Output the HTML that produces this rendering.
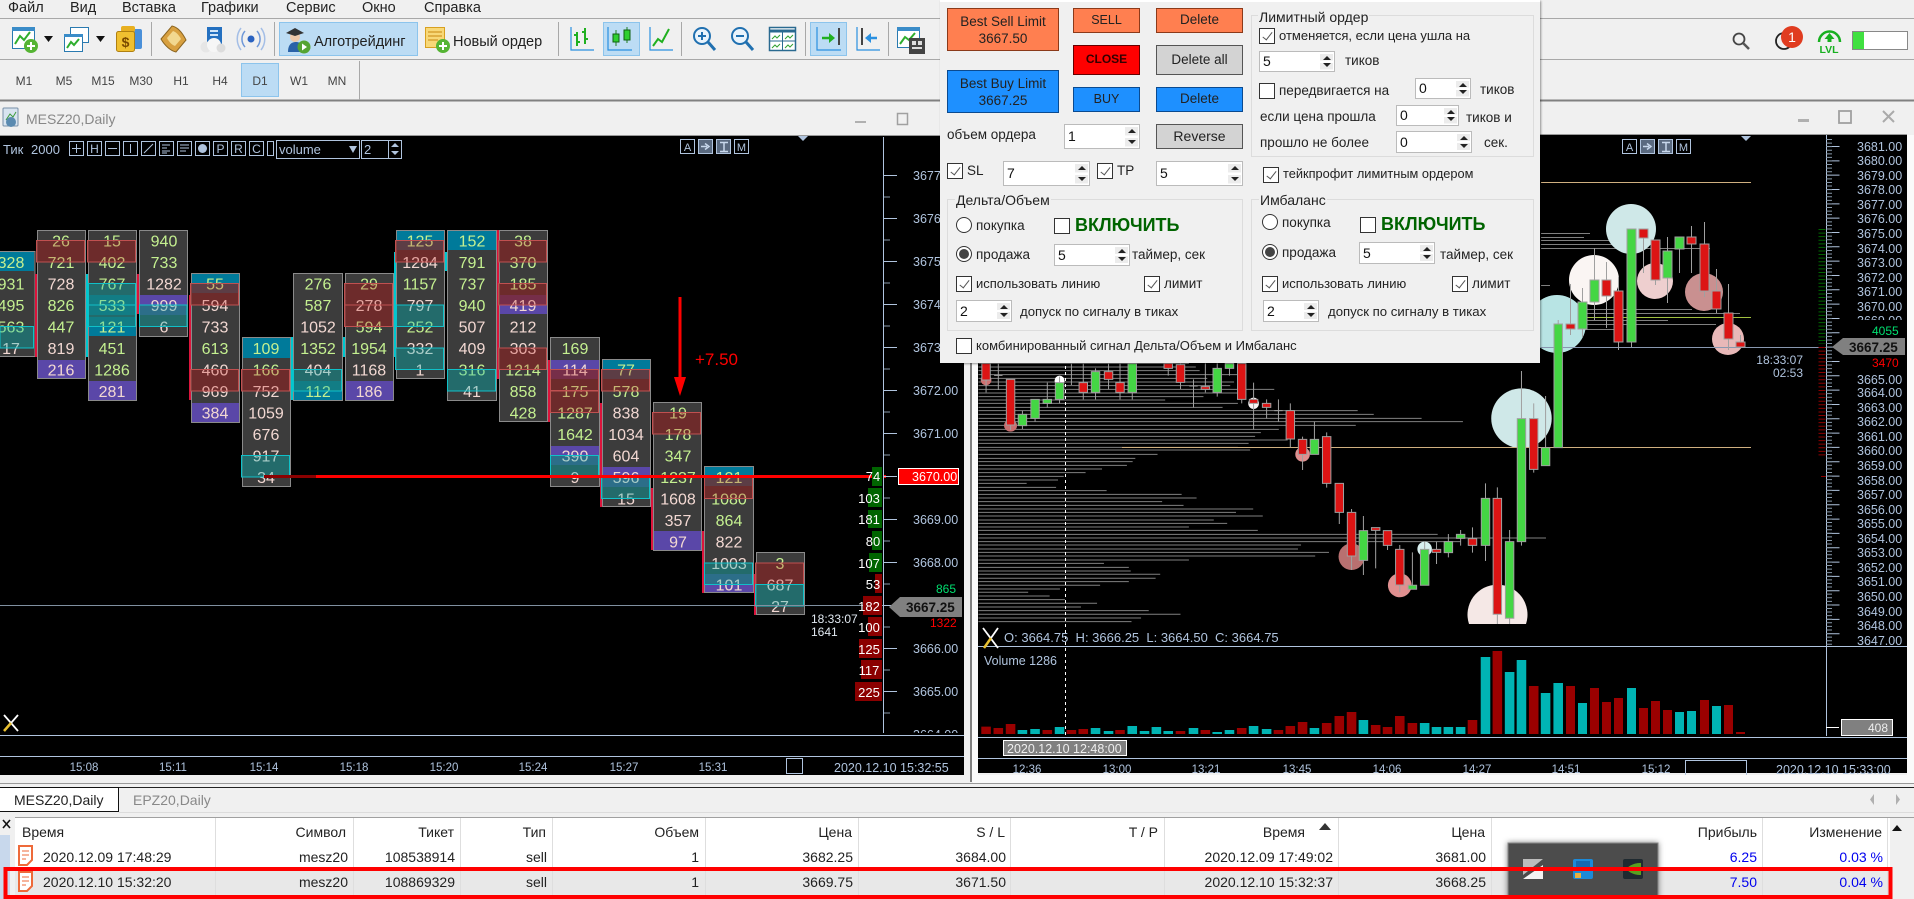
<!DOCTYPE html>
<html><head><meta charset="utf-8"><title>Chart</title>
<style>
html,body{margin:0;padding:0;width:1914px;height:899px;overflow:hidden;background:#f0f0f0;font-family:"Liberation Sans",sans-serif}
svg{position:absolute;left:0;top:0}
svg text{font-family:"Liberation Sans",sans-serif}
.n{vector-effect:non-scaling-stroke}
.a{fill:#c4f090}.b{fill:#f2d8d2}.o{fill:#c4f090}.c{fill:#c4f090}.d{fill:#f2d8d2}
.s{fill:#b0c4de}
.col{fill:#3c3c3c;stroke:#8a8a8a}
#dlg{position:absolute;left:940px;top:0;width:600px;height:363px;background:#f0f0f0;border-top:2px solid #fff;box-sizing:border-box;box-shadow:1px 1px 2px rgba(0,0,0,.4);font-size:13.5px;color:#222;z-index:5}
#dlg div{position:absolute;box-sizing:border-box;white-space:nowrap}
.t{line-height:16px}
.btn{text-align:center;font-size:13.5px;color:#222}
.or{background:#ff7f50;border:1px solid #8b3a1a}
.bl{background:#1e90ff;border:1px solid #0a4a90}
.gr{background:#d3d3d3;border:1px solid #555}
.sp{background:linear-gradient(#ececec,#ececec) no-repeat calc(100% - 1px) 2px/13px calc(50% - 3px),linear-gradient(#ececec,#ececec) no-repeat calc(100% - 1px) calc(100% - 2px)/13px calc(50% - 3px),#fff;border:1px solid #bbb;padding-left:3px;color:#111;font-size:14px}
.sp::before{content:"";position:absolute;right:3px;top:4px;border:4px solid transparent;border-top:0;border-bottom:4px solid #222}
.sp::after{content:"";position:absolute;right:3px;bottom:4px;border:4px solid transparent;border-bottom:0;border-top:4px solid #222}
.cb{width:16px;height:16px;background:#fff;border:1px solid #333}
.cb.on::after{content:"";position:absolute;left:5px;top:1px;width:4px;height:9px;border:solid #555;border-width:0 1.5px 1.5px 0;transform:rotate(38deg)}
.rd{width:16px;height:16px;background:#fff;border:1px solid #333;border-radius:50%}
.rd.on::after{content:"";position:absolute;left:2px;top:2px;width:10px;height:10px;background:#444;border-radius:50%}
.gb{border:1px solid #dcdcdc}
.gl{background:#f0f0f0;padding:0 1px;font-size:14px}
.vk{font-weight:bold;font-size:18px;color:#006400;line-height:20px}
.f13{font-size:13px}
</style></head><body>
<svg width="1914" height="899" viewBox="0 0 1914 899" xmlns="http://www.w3.org/2000/svg">
<defs>
<g id="or">
<rect x="36.500" y="240.500" width="48" height="21.500"/><rect x="87.500" y="240.500" width="48" height="21.500"/><rect x="190.500" y="283.500" width="48" height="21.500"/><rect x="190.500" y="369.500" width="48" height="21.500"/><rect x="241.500" y="369.500" width="48" height="21.500"/><rect x="344.500" y="283.500" width="48" height="21.500"/><rect x="344.500" y="305" width="48" height="21.500"/><rect x="395.500" y="240.500" width="48" height="21.500"/><rect x="498.500" y="240.500" width="48" height="21.500"/><rect x="498.500" y="283.500" width="48" height="21.500"/><rect x="498.500" y="348" width="48" height="21.500"/><rect x="550.500" y="369.500" width="48" height="21"/><rect x="550.500" y="391" width="48" height="21.500"/><rect x="601.500" y="369.500" width="48" height="21.500"/><rect x="652.500" y="412.500" width="48" height="21.500"/><rect x="704.500" y="477" width="48" height="21.500"/><rect x="755.500" y="563" width="48" height="21.500"/>
</g>
<g id="ot">
<rect x="0" y="326.500" width="33.500" height="21.500"/><rect x="88.500" y="283.500" width="47" height="21.500"/><rect x="88.500" y="305" width="47" height="21.500"/><rect x="139.500" y="305" width="47.500" height="21.500"/><rect x="241.500" y="455.500" width="48" height="21.500"/><rect x="293.500" y="369.500" width="48" height="21.500"/><rect x="396.500" y="305" width="47" height="21.500"/><rect x="395.500" y="348" width="48" height="21.500"/><rect x="447.500" y="369.500" width="48" height="21.500"/><rect x="550.500" y="455.500" width="48" height="21.500"/><rect x="601.500" y="477" width="48" height="21.500"/><rect x="704.500" y="563" width="48" height="21.500"/><rect x="755.500" y="584.500" width="48" height="21.500"/>
</g>
</defs>
<rect width="1914" height="899" fill="#f0f0f0"/>
<!-- menu -->
<g font-size="14.5" fill="#222">
<text x="8" y="12">Файл</text><text x="70" y="12">Вид</text><text x="122" y="12">Вставка</text><text x="201" y="12">Графики</text><text x="286" y="12">Сервис</text><text x="362" y="12">Окно</text><text x="424" y="12">Справка</text>
</g>
<path d="M0 18.5H1914M0 59.5H1914" stroke="#a8a8a8" fill="none"/>
<path d="M0 100.5H1914" stroke="#808080" stroke-width="2" fill="none"/>
<path d="M151.500 22V56M274.500 22V56M558.500 22V56M681.500 22V56M805.500 22V56M888.500 22V56" stroke="#a8a8a8"/>
<path d="M359.500 61V100" stroke="#a8a8a8"/>
<!-- selected buttons -->
<g fill="#bcdcf4" stroke="#8cc4ec"><rect x="279.500" y="22.500" width="138" height="33"/><rect x="603.500" y="22.500" width="36" height="33"/><rect x="810.500" y="22.500" width="36" height="33"/><rect x="241.500" y="63.500" width="37" height="33"/></g>
<!-- new chart icon -->
<g><rect x="12.500" y="27.500" width="22" height="21" fill="#fff" stroke="#2a7ab0"/><rect x="12" y="27" width="23" height="4" fill="#3a8cc8"/><path d="M15 44l5-8 4 4 6-8" fill="none" stroke="#2fae2f" stroke-width="2"/><circle cx="31" cy="46" r="7" fill="#55b433"/><path d="M31 42v8M27 46h8" stroke="#fff" stroke-width="2"/><path d="M44 36h9l-4.500 6z" fill="#111"/></g>
<g><rect x="70.500" y="27.500" width="18" height="15" fill="#fff" stroke="#2a7ab0"/><rect x="64.500" y="34.500" width="18" height="17" fill="#fff" stroke="#2a7ab0"/><rect x="64" y="34" width="19" height="3" fill="#3a8cc8"/><path d="M67 48l4-6 3 3 5-6" fill="none" stroke="#2fae2f" stroke-width="2"/><path d="M96 36h9l-4.500 6z" fill="#111"/></g>
<!-- dollar -->
<g><rect x="127" y="29" width="15" height="20" rx="2" fill="#4a90d9"/><rect x="121" y="26" width="14" height="6" rx="2" fill="#e8b020"/><rect x="116.500" y="31.500" width="18" height="20" rx="2" fill="#f0c030" stroke="#b08010"/><text x="125.500" y="47" font-size="14" font-weight="bold" text-anchor="middle" fill="#7a4a00">$</text></g>
<!-- book -->
<path d="M161 39l11-13c5 1 10 6 14 14l-10 12c-5-1-11-6-15-13z" fill="#d8a040" stroke="#8a6420"/><path d="M167 38l6-7c3 1 6 4 8 8l-6 7c-3-1-6-4-8-8z" fill="#f2d890"/>
<!-- cloud -->
<rect x="207" y="27" width="15" height="17" fill="#2470c0"/><rect x="210" y="30" width="8" height="2" fill="#cfe4f8"/><rect x="210" y="34" width="8" height="2" fill="#cfe4f8"/><circle cx="206" cy="47" r="5.500" fill="#e6e6e6"/><circle cx="214" cy="45" r="7" fill="#f6f6f6"/><circle cx="221" cy="48" r="4.500" fill="#dcdcdc"/>
<!-- signal -->
<circle cx="251" cy="39" r="3.500" fill="#2a62c0"/><path d="M245 31a12 12 0 0 0 0 16M257 31a12 12 0 0 1 0 16" fill="none" stroke="#6f98d8" stroke-width="1.500"/><path d="M241 28a18 18 0 0 0 0 22M261 28a18 18 0 0 1 0 22" fill="none" stroke="#a4bee6" stroke-width="1.500"/>
<!-- algo -->
<circle cx="295" cy="37" r="5" fill="#eec8a8"/><path d="M286 33l9-5 9 5-9 3z" fill="#333"/><path d="M288 52c0-8 4-10 8-10s7 2 8 10z" fill="#2a62a8"/><circle cx="304" cy="47" r="6.500" fill="#55a433"/><path d="M302 43.500l5 3.500-5 3.500z" fill="#fff"/>
<text x="314" y="46" font-size="14.500" fill="#222">Алготрейдинг</text>
<!-- new order -->
<rect x="425.500" y="27.500" width="19" height="20" fill="#f8d878" stroke="#d8a020"/><path d="M428 32h14M428 36h14M428 40h10" stroke="#c88810"/><circle cx="443" cy="46" r="7" fill="#55b433"/><path d="M443 42v8M439 46h8" stroke="#fff" stroke-width="2"/>
<text x="453" y="46" font-size="14.500" fill="#222">Новый ордер</text>
<!-- chart type icons -->
<g fill="none" stroke="#2a90e0" stroke-width="1.200"><path d="M571 27V50H594"/><path d="M608 27V50H632"/><path d="M650 27V50H673"/><path d="M817 27V50H841"/><path d="M857 27V50H880"/></g>
<path d="M577 32v14M577 35h-3M577 42h3M585 28v16M585 32h-3M585 39h3" stroke="#20b020" stroke-width="2" fill="none"/>
<path d="M616 30v16M627 27v16" stroke="#208020"/><rect x="613" y="34" width="6" height="8" fill="#30d030" stroke="#106010"/><rect x="624" y="30" width="6" height="10" fill="#30d030" stroke="#106010"/>
<path d="M653 46l5-7 4 3 7-13" fill="none" stroke="#20b020" stroke-width="2"/>
<!-- zoom -->
<circle cx="702" cy="36" r="8" fill="#eaf4fc" stroke="#2070b0" stroke-width="2"/><path d="M702 32v8M698 36h8" stroke="#2070b0" stroke-width="2"/><path d="M708 42l7 8" stroke="#2070b0" stroke-width="3"/>
<circle cx="740" cy="36" r="8" fill="#eaf4fc" stroke="#2070b0" stroke-width="2"/><path d="M736 36h8" stroke="#2070b0" stroke-width="2"/><path d="M746 42l7 8" stroke="#2070b0" stroke-width="3"/>
<rect x="769.500" y="27.500" width="26" height="23" fill="#fff" stroke="#2a6a90" stroke-width="1.500"/><path d="M769 31h27" stroke="#2a6a90" stroke-width="3"/><path d="M782.500 32V50M770 41H795" stroke="#2a6a90"/><path d="M772 39l3-3 2 2 3-3M785 39l3-3 2 2 3-3M772 48l3-3 2 2 3-3M785 48l3-3 2 2 3-3" fill="none" stroke="#30a030"/>
<!-- shift -->
<path d="M822 38h10" stroke="#20b020" stroke-width="2.500"/><path d="M829 33l6 5-6 5z" fill="#20b020"/><path d="M839 28v17" stroke="#444" stroke-width="2"/>
<path d="M862 28v17" stroke="#444" stroke-width="2"/><path d="M868 38h9" stroke="#2a90e0" stroke-width="2.500"/><path d="M871 33l-6 5 6 5z" fill="#2a90e0"/>
<rect x="897.500" y="27.500" width="22" height="20" fill="#fff" stroke="#2a7ab0"/><rect x="897" y="27" width="23" height="4" fill="#3a8cc8"/><path d="M900 44l5-7 4 3 6-7" fill="none" stroke="#2fae2f" stroke-width="2"/><rect x="909" y="38" width="16" height="16" fill="#444"/><rect x="912" y="41" width="4" height="4" fill="#ddd"/><rect x="918" y="41" width="4" height="4" fill="#ddd"/><rect x="912" y="47" width="10" height="2" fill="#ddd"/>
<!-- timeframes -->
<g font-size="12" fill="#444" text-anchor="middle"><text x="24" y="85">M1</text><text x="64" y="85">M5</text><text x="103" y="85">M15</text><text x="141" y="85">M30</text><text x="181" y="85">H1</text><text x="220" y="85">H4</text><text x="260" y="85">D1</text><text x="299" y="85">W1</text><text x="337" y="85">MN</text></g>
<!-- top right icons -->
<circle cx="1739" cy="39" r="5.500" fill="none" stroke="#444" stroke-width="1.800"/><path d="M1743 43l6 6" stroke="#555" stroke-width="2.500"/>
<circle cx="1784" cy="41" r="8" fill="none" stroke="#222" stroke-width="1.800"/><circle cx="1792" cy="37" r="11" fill="#e03c20"/><text x="1792" y="42" font-size="14" fill="#fff" text-anchor="middle">1</text>
<path d="M1819 42a10.500 10.500 0 0 1 21 0" fill="none" stroke="#18b020" stroke-width="2.500"/><path d="M1829.500 33l5 6h-3v3h-4v-3h-3z" fill="#18b020"/><text x="1829" y="53" font-size="10.500" font-weight="bold" fill="#18b020" text-anchor="middle">LVL</text>
<rect x="1852.500" y="31.500" width="55" height="18" fill="#fff" stroke="#888"/><rect x="1853" y="32" width="11" height="17" fill="#40e040"/>
<!-- left window title -->
<rect x="3" y="108" width="15" height="18" rx="1" fill="#d8e4f0" stroke="#7890a8"/><path d="M6 120l4-6 3 3 3-5" stroke="#3a9a3a" fill="none"/><circle cx="11" cy="122" r="5" fill="#5a8ab0"/>
<text x="26" y="124" font-size="14" fill="#888">MESZ20,Daily</text>
<rect x="855" y="121" width="11" height="2" fill="#b0b0b0"/><rect x="897.500" y="113.500" width="10" height="11" fill="none" stroke="#a0a0a0" stroke-width="1.500"/>
<!-- right window title -->
<rect x="1798" y="119" width="11" height="3" fill="#b0b0b0"/><rect x="1839" y="111" width="12" height="12" fill="none" stroke="#a0a0a0" stroke-width="1.800"/><path d="M1883 111l11 11M1894 111l-11 11" stroke="#aaa" stroke-width="2"/>
<!-- window frames -->
<rect x="970" y="102" width="2" height="682" fill="#808080"/><rect x="972" y="102" width="6" height="682" fill="#fafafa"/>
<rect x="1907" y="135" width="7" height="649" fill="#fafafa"/>
<rect x="0" y="136" width="964" height="639" fill="#000"/>
<rect x="978" y="135" width="929" height="638" fill="#000"/>
<path d="M0 135.500H970M978 134.500H1907" stroke="#999"/>
<!-- chart toolbar left -->
<text x="3" y="154" font-size="13" class="s">Тик</text><text x="31" y="154" font-size="13" class="s">2000</text>
<g fill="none" stroke="#b0c4de"><rect x="69.500" y="141.500" width="14" height="14"/><rect x="87.500" y="141.500" width="14" height="14"/><rect x="105.500" y="141.500" width="14" height="14"/><rect x="123.500" y="141.500" width="14" height="14"/><rect x="141.500" y="141.500" width="14" height="14"/><rect x="159.500" y="141.500" width="14" height="14"/><rect x="177.500" y="141.500" width="14" height="14"/><rect x="195.500" y="141.500" width="14" height="14"/><rect x="213.500" y="141.500" width="14" height="14"/><rect x="231.500" y="141.500" width="14" height="14"/><rect x="249.500" y="141.500" width="14" height="14"/><rect x="267.500" y="141.500" width="6" height="14"/><rect x="276.500" y="140.500" width="83" height="18"/><rect x="361.500" y="140.500" width="40" height="18"/><path d="M388.500 141V158"/>
<path d="M72 148.500H81M76.500 144V153M108 148.500H117M130.500 144V153M144 153L153 144M162 145h8M162 148h5M162 151h8M162 153h5M180 145h9M180 148h9M180 151h6"/></g>
<g font-size="12" class="s" text-anchor="middle"><text x="94.500" y="153">H</text><text x="220.500" y="153">P</text><text x="238.500" y="153">R</text><text x="256.500" y="153">C</text></g>
<circle cx="202.500" cy="148.500" r="4.500" class="s"/>
<text x="279" y="154" font-size="13" class="s">volume</text><path d="M349 146h8l-4 7z" class="s"/><text x="364" y="154" font-size="13" class="s">2</text><path d="M391 147l4-4 4 4zM391 151l4 4 4-4z" class="s"/>
<g><rect x="680.500" y="139.500" width="14" height="14" fill="none" stroke="#b0c4de"/><rect x="698.500" y="139.500" width="14" height="14" fill="#5a6a80" stroke="#b0c4de"/><rect x="716.500" y="139.500" width="14" height="14" fill="#5a6a80" stroke="#b0c4de"/><rect x="734.500" y="139.500" width="14" height="14" fill="none" stroke="#b0c4de"/></g>
<g font-size="11" class="s" text-anchor="middle"><text x="687.500" y="151">A</text><text x="741.500" y="151">M</text></g>
<path d="M701 146.500h6M705 143.500l4 3-4 3M720 142.500h8M720 151.500h8M724 142.500v9" fill="none" stroke="#c8d8ec" stroke-width="1.500"/>
<path d="M798 136h10l-5 5z" class="s"/>

<!-- footprint columns -->
<g class="col">
<rect x="-2" y="251.500" width="37" height="105"/><rect x="37.500" y="230.500" width="48" height="148"/><rect x="88.500" y="230.500" width="48" height="170"/><rect x="139.500" y="230.500" width="48" height="106"/><rect x="191.500" y="273.500" width="48" height="149"/><rect x="242.500" y="337.500" width="48" height="149"/><rect x="293.500" y="273.500" width="49" height="127"/><rect x="345.500" y="273.500" width="48" height="127"/><rect x="396.500" y="230.500" width="48" height="148"/><rect x="447.500" y="230.500" width="49" height="170"/><rect x="499.500" y="230.500" width="48" height="191"/><rect x="550.500" y="337.500" width="49" height="149"/><rect x="602.500" y="359.500" width="48" height="147"/><rect x="653.500" y="402.500" width="48" height="148"/><rect x="704.500" y="466.500" width="49" height="126"/><rect x="756.500" y="552.500" width="48" height="62"/>
</g>
<!-- coloured cells -->
<g fill="#007a9a">
<rect x="0" y="252" width="34" height="19"/><rect x="89" y="295" width="47" height="20"/><rect x="89" y="317" width="47" height="19"/><rect x="192" y="274" width="47" height="19"/><rect x="243" y="338" width="47" height="20"/><rect x="294" y="381" width="48" height="19"/><rect x="397" y="231" width="47" height="19"/><rect x="448" y="231" width="48" height="19"/><rect x="603" y="360" width="47" height="19"/><rect x="705" y="467" width="48" height="19"/>
</g>
<g fill="#5a47a8">
<rect x="38" y="360" width="47" height="18"/><rect x="89" y="381" width="47" height="19"/><rect x="140" y="295" width="47" height="20"/><rect x="192" y="403" width="47" height="19"/><rect x="346" y="381" width="47" height="19"/><rect x="500" y="295" width="47" height="19"/><rect x="551" y="360" width="48" height="19"/><rect x="551" y="446" width="48" height="19"/><rect x="603" y="467" width="47" height="20"/><rect x="654" y="531" width="47" height="19"/><rect x="705" y="574" width="48" height="18"/>
</g>
<!-- side bars -->
<g fill="#dc143c">
<rect x="35" y="274" width="2" height="83"/><rect x="137" y="274" width="2" height="40"/><rect x="189" y="295" width="2" height="105"/><rect x="497" y="230" width="2" height="149"/><rect x="548" y="360" width="2" height="62"/><rect x="600" y="403" width="2" height="104"/><rect x="651" y="488" width="2" height="62"/><rect x="702" y="531" width="2" height="62"/><rect x="754" y="574" width="2" height="41"/>
</g>
<g fill="#00c8d0">
<rect x="86" y="274" width="2" height="83"/><rect x="291" y="337" width="2" height="63"/><rect x="343" y="337" width="2" height="20"/><rect x="394" y="252" width="2" height="105"/><rect x="445" y="252" width="2" height="19"/>
</g>
<!-- overlay base (under numbers) -->
<use href="#or" fill="#4e1c1c" fill-opacity=".6"/>
<use href="#ot" fill="#2d5858" fill-opacity=".6"/>
<!-- numbers -->
<g font-size="16" text-anchor="middle">
<text x="11" y="268" class="a">328</text><text x="11" y="289.500" class="a">931</text><text x="11" y="311" class="a">495</text><text x="11" y="332.500" class="a">563</text><text x="11" y="354" class="b">17</text>
<text x="61" y="246.500" class="o">26</text><text x="61" y="268" class="a">721</text><text x="61" y="289.500" class="b">728</text><text x="61" y="311" class="a">826</text><text x="61" y="332.500" class="a">447</text><text x="61" y="354" class="b">819</text><text x="61" y="375.500" class="b">216</text>
<text x="112" y="246.500" class="o">15</text><text x="112" y="268" class="o">402</text><text x="112" y="289.500" class="a">767</text><text x="112" y="311" class="c">533</text><text x="112" y="332.500" class="a">121</text><text x="112" y="354" class="a">451</text><text x="112" y="375.500" class="a">1286</text><text x="112" y="397" class="b">281</text>
<text x="164" y="246.500" class="a">940</text><text x="164" y="268" class="a">733</text><text x="164" y="289.500" class="b">1282</text><text x="164" y="311" class="b">999</text><text x="164" y="332.500" class="d">6</text>
<text x="215" y="289.500" class="o">55</text><text x="215" y="311" class="b">594</text><text x="215" y="332.500" class="b">733</text><text x="215" y="354" class="a">613</text><text x="215" y="375.500" class="b">460</text><text x="215" y="397" class="b">969</text><text x="215" y="418.500" class="b">384</text>
<text x="266" y="354" class="a">109</text><text x="266" y="375.500" class="o">166</text><text x="266" y="397" class="b">752</text><text x="266" y="418.500" class="b">1059</text><text x="266" y="440" class="b">676</text><text x="266" y="461.500" class="b">917</text><text x="266" y="483" class="b">34</text>
<text x="318" y="289.500" class="a">276</text><text x="318" y="311" class="a">587</text><text x="318" y="332.500" class="b">1052</text><text x="318" y="354" class="a">1352</text><text x="318" y="375.500" class="d">404</text><text x="318" y="397" class="a">112</text>
<text x="369" y="289.500" class="o">29</text><text x="369" y="311" class="b">278</text><text x="369" y="332.500" class="o">594</text><text x="369" y="354" class="a">1954</text><text x="369" y="375.500" class="b">1168</text><text x="369" y="397" class="b">186</text>
<text x="420" y="246.500" class="o">125</text><text x="420" y="268" class="b">1284</text><text x="420" y="289.500" class="a">1157</text><text x="420" y="311" class="d">797</text><text x="420" y="332.500" class="a">252</text><text x="420" y="354" class="d">332</text><text x="420" y="375.500" class="b">1</text>
<text x="472" y="246.500" class="a">152</text><text x="472" y="268" class="a">791</text><text x="472" y="289.500" class="a">737</text><text x="472" y="311" class="a">940</text><text x="472" y="332.500" class="b">507</text><text x="472" y="354" class="b">409</text><text x="472" y="375.500" class="a">316</text><text x="472" y="397" class="b">41</text>
<text x="523" y="246.500" class="o">38</text><text x="523" y="268" class="o">370</text><text x="523" y="289.500" class="o">185</text><text x="523" y="311" class="b">419</text><text x="523" y="332.500" class="b">212</text><text x="523" y="354" class="b">303</text><text x="523" y="375.500" class="a">1214</text><text x="523" y="397" class="a">858</text><text x="523" y="418.500" class="a">428</text>
<text x="575" y="354" class="a">169</text><text x="575" y="375.500" class="b">114</text><text x="575" y="397" class="o">175</text><text x="575" y="418.500" class="a">1287</text><text x="575" y="440" class="a">1642</text><text x="575" y="461.500" class="b">390</text><text x="575" y="483" class="b">9</text>
<text x="626" y="375.500" class="o">77</text><text x="626" y="397" class="o">578</text><text x="626" y="418.500" class="b">838</text><text x="626" y="440" class="b">1034</text><text x="626" y="461.500" class="b">604</text><text x="626" y="483" class="b">596</text><text x="626" y="504.500" class="b">15</text>
<text x="678" y="418.500" class="o">19</text><text x="678" y="440" class="a">178</text><text x="678" y="461.500" class="a">347</text><text x="678" y="483" class="a">1237</text><text x="678" y="504.500" class="b">1608</text><text x="678" y="526" class="b">357</text><text x="678" y="547.500" class="b">97</text>
<text x="729" y="483" class="o">121</text><text x="729" y="504.500" class="a">1080</text><text x="729" y="526" class="a">864</text><text x="729" y="547.500" class="b">822</text><text x="729" y="569" class="d">1003</text><text x="729" y="590.500" class="b">101</text>
<text x="780" y="569" class="o">3</text><text x="780" y="590.500" class="d">687</text><text x="780" y="612" class="b">27</text>
</g>
<!-- overlay tint (over numbers) -->
<use href="#or" fill="#c83232" fill-opacity=".3" stroke="#c05050"/>
<use href="#ot" fill="#00b4b4" fill-opacity=".3" stroke="#10c0c8"/>
<!-- lines on left chart -->
<path d="M0 605.500H883" stroke="#8090a0"/>
<path d="M264 476.500H316" stroke="#8b0000" stroke-width="3"/><path d="M316 476.500H880" stroke="#f00" stroke-width="3"/>
<rect x="883" y="475" width="3" height="3" fill="#f00"/>
<path d="M680 297V378" stroke="#f00" stroke-width="3"/><path d="M674 377h12l-6 19z" fill="#f00"/>
<text x="695" y="365" font-size="17" fill="#f00">+7.50</text>
<!-- left axis -->
<path d="M883.500 137V733" stroke="#b0c4de"/>
<path d="M890.500 175V730" stroke="#b0c4de" stroke-width="13" stroke-dasharray="1 42" fill="none"/>
<path d="M887 196.500V730" stroke="#8899aa" stroke-width="6" stroke-dasharray="1 42"/>
<g font-size="12.500" class="s"><text x="913" y="180">3677.00</text><text x="913" y="223">3676.00</text><text x="913" y="266">3675.00</text><text x="913" y="309">3674.00</text><text x="913" y="352">3673.00</text><text x="913" y="395">3672.00</text><text x="913" y="438">3671.00</text><text x="913" y="524">3669.00</text><text x="913" y="567">3668.00</text><text x="913" y="653">3666.00</text><text x="913" y="696">3665.00</text></g>
<svg x="880" y="727" width="84" height="6"><text x="33" y="12" font-size="12.500" class="s">3664.00</text></svg>
<rect x="898.500" y="468.500" width="60" height="16" fill="#f00" stroke="#fff"/><text x="912" y="481" font-size="12.500" fill="#fff">3670.00</text>
<path d="M889 607l11-10h62v20h-62z" fill="#808080"/><text x="906" y="612" font-size="13.500" font-weight="bold" fill="#111">3667.25</text>
<text x="936" y="593" font-size="12" fill="#00e070">865</text><text x="930" y="627" font-size="12" fill="#f00">1322</text>
<text x="811" y="623" font-size="12" fill="#e0e8f0">18:33:07</text><text x="811" y="636" font-size="12" fill="#e0e8f0">1641</text>
<!-- ladder -->
<g fill="#006400"><rect x="872" y="467" width="10" height="19"/><rect x="868" y="488" width="14" height="19"/><rect x="868" y="510" width="14" height="18"/><rect x="872" y="531" width="10" height="19"/><rect x="869" y="553" width="13" height="19"/></g>
<g fill="#8b0000"><rect x="875" y="574" width="7" height="19"/><rect x="863" y="596" width="19" height="19"/><rect x="868" y="617" width="14" height="19"/><rect x="859" y="639" width="23" height="19"/><rect x="861" y="660" width="21" height="19"/><rect x="855" y="682" width="27" height="19"/></g>
<g font-size="13" fill="#fff" text-anchor="middle"><text x="873" y="481">74</text><text x="869" y="503">103</text><text x="869" y="524">181</text><text x="873" y="546">80</text><text x="869" y="568">107</text><text x="873" y="589">53</text><text x="869" y="611">182</text><text x="869" y="632">100</text><text x="869" y="654">125</text><text x="869" y="675">117</text><text x="869" y="697">225</text></g>
<path d="M4 715l14 16" stroke="#fff" stroke-width="1.800"/><path d="M18 715l-7 8" stroke="#fff" stroke-width="1.800"/><path d="M11 723l-7 8" stroke="#e8c030" stroke-width="2.500"/>
<path d="M0 735.500H964M0 756.500H964" stroke="#b0c4de"/>
<g font-size="11.500" class="s" text-anchor="middle"><text x="84" y="771">15:08</text><text x="173" y="771">15:11</text><text x="264" y="771">15:14</text><text x="354" y="771">15:18</text><text x="444" y="771">15:20</text><text x="533" y="771">15:24</text><text x="624" y="771">15:27</text><text x="713" y="771">15:31</text></g>
<rect x="786.500" y="758.500" width="16" height="15" fill="none" stroke="#b0c4de"/>
<text x="834" y="772" font-size="12.500" class="s">2020.12.10 15:32:55</text>

<!-- RIGHT CHART -->
<g fill="none" stroke="#808080">
<path d="M1541 233.500H1590M1541 237.500H1584M1541 240.500H1630M1541 244.500H1620M1541 248.500H1710M1541 285.500H1550M1541 309.500H1692M1541 313.500H1740M1541 320.500H1668M1541 324.500H1716M1541 329.500H1620M1541 335.500H1560"/>
<g transform="translate(970 360) scale(.3827 .3333)"><path class="n" d="M22 10H572M22 21H590M22 32H600M22 44H700M22 55H620M22 66H690M22 77H680M22 88H795M22 99H700M22 110H610M22 120H510M22 130H700M22 142H660M22 152H1013M22 163H1055M22 175H1180M22 185H1288M22 196H1008M22 208H807M22 218H760M22 229H745M22 240H830M22 250H728M22 262H700M22 270H732M22 283H490M22 295H432M22 305H425M22 316H410M22 327H345M22 338H302M22 349H245M22 360H230M22 370H148M22 382H225M22 392H357M22 403H553M22 414H592M22 425H502M22 436H558M22 447H740M22 457H695M22 468H765M22 480H637M22 490H672M22 501H572M22 511H752M22 523H1222M22 534H1505M22 545H1283M22 555H865M22 567H857M22 577H938M22 588H902M22 600H572M22 610H350M22 622H415M22 633H420M22 643H497M22 655H485M22 665H415M22 676H340M22 687H235M22 697H152M22 708H208M22 719H248M22 730H332M22 741H290M22 752H467M22 763H550M22 774H447M22 785H422"/></g>
</g>
<!-- circles -->
<g transform="translate(970 360) scale(.3827 .3333)">
<ellipse cx="42" cy="60" rx="14" ry="16" fill="#d07070"/><ellipse cx="106" cy="197" rx="17" ry="18" fill="#c87070"/><ellipse cx="234" cy="62" rx="13" ry="15" fill="#fff"/><ellipse cx="741" cy="130" rx="14" ry="17" fill="#f8f4f4"/><ellipse cx="869" cy="283" rx="19" ry="22" fill="#e09090"/><ellipse cx="997" cy="590" rx="34" ry="40" fill="#b87070"/><ellipse cx="1123" cy="676" rx="31" ry="36" fill="#e09090"/><ellipse cx="1188" cy="567" rx="19" ry="22" fill="#d8f0f0"/><ellipse cx="1441" cy="175" rx="79" ry="90" fill="#cfe8e8"/>
</g>
<path d="M1469 624A30 30 0 1 1 1526 624Z" fill="#f5e8e6"/>
<circle cx="1557" cy="324" r="29" fill="#b8e4e4"/><circle cx="1631" cy="229" r="25" fill="#cfe8e8"/><circle cx="1594" cy="280" r="25" fill="#faf5f3"/><circle cx="1655" cy="281" r="18" fill="#eecfcf"/><circle cx="1704" cy="292" r="19" fill="#c99090"/><circle cx="1728" cy="339" r="16" fill="#e8b8b8"/>
<!-- horizontals -->
<path d="M1541 182.500H1751" stroke="#d0b080"/><path d="M1122 447.500H1751" stroke="#d0b080"/><path d="M1585 317.500H1751" stroke="#a0c040"/><path d="M1541 347.500H1826" stroke="#8898b0"/>
<!-- candles -->
<g transform="translate(970 360) scale(.3827 .3333)" fill="none">
<path class="n" stroke="#a0a0a0" d="M42 10V97M74 10V90M106 58V210M137 152V207M170 118V185M202 68V143M234 50V130M265 10V75M296 10V118M328 25V118M362 10V88M392 10V118M424 10V118M518 10V47M550 10V87M584 58V143M615 10V97M646 10V110M678 10V47M710 10V130M741 68V208M775 118V175M806 118V185M837 130V262M869 230V330M900 185V283M932 217V383M965 370V492M997 447V630M1028 468V645M1060 503V625M1091 512V570M1123 555V697M1156 577V688M1188 545V676M1219 545V612M1250 522V592M1282 510V557M1313 502V578M1347 370V603M1378 382V792M1410 510V792M1441 33V557M1473 130V338M1504 108V263M1537 -120V263M63 46H85M573 78H595M795 152H817"/>
<path class="n" fill="#dc1414" stroke="#a0a0a0" d="M31 10H53V60H31ZM95 58H117V195H95ZM285 68H307V97H285ZM351 35H373V58H351ZM381 68H403V97H381ZM507 10H529V25H507ZM539 14H561V67H539ZM604 80H626V88H604ZM699 10H721V118H699ZM730 118H752V130H730ZM764 130H786V142H764ZM826 152H848V237H826ZM858 238H880V283H858ZM921 230H943V370H921ZM954 370H976V457H954ZM986 457H1008V588H986ZM1049 503H1071V511H1049ZM1080 512H1102V556H1080ZM1112 568H1134V675H1112ZM1208 568H1230V577H1208ZM1302 536H1324V556H1302ZM1367 415H1389V763H1367ZM1462 176H1484V328H1462Z"/>
<path class="n" fill="#44d644" stroke="#a0a0a0" d="M126 163H148V197H126ZM159 118H181V175H159ZM191 118H213V130H191ZM223 68H245V118H223ZM317 35H339V97H317ZM413 10H435V97H413ZM635 25H657V97H635ZM667 10H689V25H667ZM889 238H911V283H889ZM1017 512H1039V601H1017ZM1145 676H1167V688H1145ZM1177 568H1199V676H1177ZM1239 545H1261V578H1239ZM1271 523H1293V535H1271ZM1336 415H1358V556H1336ZM1399 545H1421V775H1399ZM1430 176H1452V545H1430ZM1493 263H1515V317H1493ZM1526 -108H1548V263H1526Z"/>
</g>
<path stroke="#a0a0a0" fill="none" d="M1570.500 284V335M1582.500 288V337M1594.500 248V320M1606.500 262V328M1618.500 277V350M1631.500 229V347M1643.500 229V273M1655.500 240V285M1667.500 237V303M1679.500 237V273M1691.500 226V273M1704.500 222V297M1716.500 269V313M1728.500 284V350M1740.500 335V347"/>
<path fill="#dc1414" stroke="#a0a0a0" d="M1566 324H1575V329H1566ZM1602 280H1611V296H1602ZM1614 291H1623V342H1614ZM1639 229H1648V238H1639ZM1651 240H1660V280H1651ZM1687 237H1696V244H1687ZM1700 244H1709V291H1700ZM1712 291H1721V309H1712ZM1724 313H1733V339H1724ZM1736 342H1745V347H1736Z"/>
<path fill="#44d644" stroke="#a0a0a0" d="M1578 302H1587V329H1578ZM1590 280H1599V302H1590ZM1627 229H1636V342H1627ZM1663 251H1672V278H1663ZM1675 237H1684V249H1675Z"/>
<!-- right chart top buttons -->
<g><rect x="1622.500" y="139.500" width="14" height="14" fill="none" stroke="#b0c4de"/><rect x="1640.500" y="139.500" width="14" height="14" fill="#5a6a80" stroke="#b0c4de"/><rect x="1658.500" y="139.500" width="14" height="14" fill="#5a6a80" stroke="#b0c4de"/><rect x="1676.500" y="139.500" width="14" height="14" fill="none" stroke="#b0c4de"/></g>
<g font-size="11" class="s" text-anchor="middle"><text x="1629.500" y="151">A</text><text x="1683.500" y="151">M</text></g>
<path d="M1643 146.500h6M1647 143.500l4 3-4 3M1662 142.500h8M1662 151.500h8M1666 142.500v9" fill="none" stroke="#c8d8ec" stroke-width="1.500"/>
<path d="M1741 136h10l-5 5z" class="s"/>
<!-- right axis -->
<path d="M1826.500 135V736" stroke="#b0c4de"/>
<path d="M1833 146V646" stroke="#b0c4de" stroke-width="13" stroke-dasharray="1 13.330" fill="none"/>
<path d="M1829 139V646" stroke="#8899aa" stroke-width="6" stroke-dasharray="1 2.580" fill="none"/>
<path d="M1822 229V344" stroke="#006400" stroke-width="7" stroke-dasharray="1 2.580" fill="none"/>
<path d="M1822 347V456" stroke="#8b0000" stroke-width="7" stroke-dasharray="1 2.580" fill="none"/>
<rect x="1821" y="476" width="5" height="1" fill="#8b0000"/>
<g font-size="12.500" class="s"><text x="1857" y="151">3681.00</text><text x="1857" y="165">3680.00</text><text x="1857" y="180">3679.00</text><text x="1857" y="194">3678.00</text><text x="1857" y="209">3677.00</text><text x="1857" y="223">3676.00</text><text x="1857" y="238">3675.00</text><text x="1857" y="253">3674.00</text><text x="1857" y="267">3673.00</text><text x="1857" y="282">3672.00</text><text x="1857" y="296">3671.00</text><text x="1857" y="311">3670.00</text><text x="1857" y="384">3665.00</text><text x="1857" y="397">3664.00</text><text x="1857" y="412">3663.00</text><text x="1857" y="426">3662.00</text><text x="1857" y="441">3661.00</text><text x="1857" y="455">3660.00</text><text x="1857" y="470">3659.00</text><text x="1857" y="485">3658.00</text><text x="1857" y="499">3657.00</text><text x="1857" y="514">3656.00</text><text x="1857" y="528">3655.00</text><text x="1857" y="543">3654.00</text><text x="1857" y="557">3653.00</text><text x="1857" y="572">3652.00</text><text x="1857" y="586">3651.00</text><text x="1857" y="601">3650.00</text><text x="1857" y="616">3649.00</text><text x="1857" y="630">3648.00</text><text x="1857" y="645">3647.00</text></g>
<svg x="1850" y="315" width="57" height="5"><text x="7" y="10" font-size="12.500" class="s">3669.00</text></svg>
<text x="1872" y="335" font-size="12" fill="#00e070">4055</text><text x="1872" y="367" font-size="12" fill="#f00">3470</text>
<path d="M1832 347l11-9h62v17h-62z" fill="#808080"/><text x="1849" y="352" font-size="13.500" font-weight="bold" fill="#111">3667.25</text>
<g font-size="12" class="s" text-anchor="end"><text x="1803" y="364">18:33:07</text><text x="1803" y="377">02:53</text></g>
<!-- sub pane -->
<path d="M978 646.500H1907" stroke="#b0c4de"/>
<path d="M1065.500 360V738" stroke="#fff" stroke-dasharray="3 3"/>
<text x="1004" y="642" font-size="13" class="s" xml:space="preserve">O: 3664.75  H: 3666.25  L: 3664.50  C: 3664.75</text>
<path d="M983 628l15 20" stroke="#fff" stroke-width="1.800"/><path d="M998 628l-7 10" stroke="#fff" stroke-width="1.800"/><path d="M991 638l-7 10" stroke="#e8c030" stroke-width="2.500"/>
<text x="984" y="665" font-size="12.500" class="s">Volume 1286</text>
<g transform="translate(970 360) scale(.3827 .3333)" fill="none" stroke-width="25">
<path stroke="#9b0000" d="M42 1100V1122M74 1104V1122M106 1092V1122M202 1110V1122M265 1110V1122M296 1107V1122M392 1110V1122M550 1113V1122M615 1110V1122M710 1104V1122M806 1110V1122M837 1098V1122M869 1086V1122M932 1089V1122M965 1068V1122M997 1056V1122M1060 1095V1122M1091 1101V1122M1123 1068V1122M1156 1089V1122M1313 1080V1122M1378 873V1122M1473 978V1122"/>
<path stroke="#00b4b4" d="M137 1110V1122M170 1107V1122M234 1101V1122M328 1104V1122M362 1113V1122M424 1098V1122M456 1113V1122M487 1101V1122M518 1113V1122M584 1104V1122M646 1116V1122M678 1110V1122M741 1098V1122M775 1107V1122M900 1104V1122M1028 1080V1122M1188 1089V1122M1219 1101V1122M1250 1101V1122M1282 1101V1122M1347 891V1122M1410 936V1122M1441 900V1122M1504 999V1122M1537 969V1122"/>
</g>
<g fill="none" stroke-width="9">
<path stroke="#9b0000" d="M1570.500 686V734M1594.500 688V734M1606.500 702V734M1618.500 698V734M1643.500 708V734M1655.500 701V734M1667.500 710V734M1704.500 700V734M1728.500 705V734M1740.500 732V734"/>
<path stroke="#00b4b4" d="M1582.500 703V734M1631.500 688V734M1679.500 712V734M1691.500 711V734M1716.500 706V734"/>
</g>
<rect x="1841.500" y="719.500" width="51" height="16" fill="#808080" stroke="#fff"/><text x="1888" y="732" font-size="12" fill="#eee" text-anchor="end">408</text>
<path d="M1826 727.500H1839" stroke="#fff"/>
<path d="M978 737.500H1907M978 758.500H1907" stroke="#b0c4de"/>
<rect x="1003.500" y="740.500" width="123" height="15" fill="#808080" stroke="#fff"/><text x="1007" y="753" font-size="12.500" fill="#eee">2020.12.10 12:48:00</text>
<g font-size="11.500" class="s" text-anchor="middle"><text x="1027" y="773">12:36</text><text x="1117" y="773">13:00</text><text x="1206" y="773">13:21</text><text x="1297" y="773">13:45</text><text x="1387" y="773">14:06</text><text x="1477" y="773">14:27</text><text x="1566" y="773">14:51</text><text x="1656" y="773">15:12</text></g>
<rect x="1685.500" y="760.500" width="61" height="15" fill="none" stroke="#b0c4de"/>
<text x="1776" y="774" font-size="12.500" class="s">2020.12.10 15:33:00</text>

<!-- bottom panel -->
<rect x="0" y="782" width="1914" height="117" fill="#f0f0f0"/>
<path d="M0 783.500H1914" stroke="#999"/>
<rect x="973" y="775" width="941" height="8" fill="#fafafa"/>
<path d="M118 787.500H1914" stroke="#222"/>
<rect x="0" y="787" width="118" height="24" fill="#fff"/><path d="M0 787.500H118.500V811.500H0" fill="none" stroke="#111"/>
<text x="14" y="805" font-size="14" fill="#222">MESZ20,Daily</text><text x="133" y="805" font-size="14" fill="#888">EPZ20,Daily</text>
<path d="M1874 794v11l-4-5.500zM1896 794v11l4-5.500z" fill="#b0b0b0"/>
<path d="M119 812.500H1914" stroke="#dcdcdc"/>
<rect x="15" y="817" width="1899" height="82" fill="#fff"/><path d="M15 817.500H1914" stroke="#a0a0a0"/>
<rect x="0" y="835" width="10" height="64" fill="#c8d8ec"/>
<path d="M3 820l7 8M10 820l-7 8" stroke="#111" stroke-width="1.600"/>
<rect x="15" y="870" width="1876" height="26" fill="#e8e8e8"/>
<path d="M215.500 818V896M353.500 818V896M460.500 818V896M552.500 818V896M705.500 818V896M858.500 818V896M1010.500 818V896M1164.500 818V896M1338.500 818V896M1491.500 818V896M1762.500 818V896M1887.500 818V896" stroke="#dedede"/>
<rect x="1890" y="818" width="24" height="81" fill="#f0f0f0"/><path d="M1892 831l5-6 5 6z" fill="#111"/>
<g font-size="14" fill="#222" text-anchor="end">
<text x="22" y="837" text-anchor="start">Время</text><text x="346" y="837">Символ</text><text x="454" y="837">Тикет</text><text x="546" y="837">Тип</text><text x="699" y="837">Объем</text><text x="852" y="837">Цена</text><text x="1005" y="837">S / L</text><text x="1158" y="837">T / P</text><text x="1305" y="837">Время</text><text x="1485" y="837">Цена</text><text x="1757" y="837">Прибыль</text><text x="1882" y="837">Изменение</text>
<text x="43" y="862" text-anchor="start">2020.12.09 17:48:29</text><text x="348" y="862">mesz20</text><text x="455" y="862">108538914</text><text x="547" y="862">sell</text><text x="699" y="862">1</text><text x="853" y="862">3682.25</text><text x="1006" y="862">3684.00</text><text x="1333" y="862">2020.12.09 17:49:02</text><text x="1486" y="862">3681.00</text>
<text x="43" y="887" text-anchor="start">2020.12.10 15:32:20</text><text x="348" y="887">mesz20</text><text x="455" y="887">108869329</text><text x="547" y="887">sell</text><text x="699" y="887">1</text><text x="853" y="887">3669.75</text><text x="1006" y="887">3671.50</text><text x="1333" y="887">2020.12.10 15:32:37</text><text x="1486" y="887">3668.25</text>
<g fill="#0000ee"><text x="1757" y="862">6.25</text><text x="1883" y="862">0.03 %</text><text x="1757" y="887">7.50</text><text x="1883" y="887">0.04 %</text></g>
</g>
<path d="M1319 830l6-7 6 7z" fill="#333"/>
<g fill="#fff" stroke="#ee6a3a" stroke-width="2"><path d="M19 846H32V860L27 865H19Z"/><path d="M19 872H32V886L27 891H19Z"/></g>
<path d="M22 851h7M22 855h7M22 859h4M22 877h7M22 881h7M22 885h4" stroke="#ee6a3a"/>
<!-- tray popup -->
<rect x="1508" y="843" width="150" height="56" fill="#4c4c4c" stroke="#8a8a8a" style="filter:drop-shadow(0 0 3px rgba(0,0,0,.5))"/>
<path d="M1523 859H1543L1523 875V859Z" fill="#bcbcbc"/><path d="M1543 865V879H1523L1543 865Z" fill="#f4f4f4"/>
<rect x="1573" y="859" width="20" height="20" rx="2" fill="#1c8ad8"/><rect x="1576" y="861" width="14" height="7" fill="#1668b0"/><rect x="1575" y="873" width="6" height="5" fill="#e8b040"/>
<rect x="1623" y="859" width="20" height="20" rx="2" fill="#1f2a30"/><path d="M1626 869c6-6 12-6 15-6v12c-3 0-9 0-15-6z" fill="#5aa020"/>
<!-- red rectangle -->
<rect x="5.500" y="869" width="1885" height="28" fill="none" stroke="#f00" stroke-width="4"/>
</svg>

<div id="dlg">
<div class="btn or" style="left:7px;top:6px;width:112px;height:43px;padding-top:4px;line-height:17px">Best Sell Limit<br>3667.50</div>
<div class="btn bl" style="left:7px;top:68px;width:112px;height:43px;padding-top:4px;line-height:17px">Best Buy Limit<br>3667.25</div>
<div class="btn or" style="left:133px;top:6px;width:67px;height:25px;line-height:22px;font-size:12.500px">SELL</div>
<div class="btn" style="left:133px;top:43px;width:67px;height:30px;line-height:27px;background:#f00;border:1px solid #600;font-weight:bold;font-size:12px;color:#300">CLOSE</div>
<div class="btn bl" style="left:133px;top:85px;width:67px;height:25px;line-height:22px;font-size:12.500px">BUY</div>
<div class="btn or" style="left:216px;top:6px;width:87px;height:25px;line-height:22px">Delete</div>
<div class="btn gr" style="left:216px;top:43px;width:87px;height:30px;line-height:27px">Delete all</div>
<div class="btn bl" style="left:216px;top:85px;width:87px;height:25px;line-height:22px">Delete</div>
<div class="btn gr" style="left:216px;top:122px;width:87px;height:25px;line-height:23px;font-size:14px">Reverse</div>
<div class="t" style="left:7px;top:125px">объем ордера</div>
<div class="sp" style="left:124px;top:122px;width:76px;height:25px;line-height:23px">1</div>
<div class="cb on" style="left:7px;top:161px"></div><div class="t" style="left:27px;top:161px">SL</div>
<div class="sp" style="left:63px;top:159px;width:87px;height:25px;line-height:23px">7</div>
<div class="cb on" style="left:157px;top:161px"></div><div class="t" style="left:177px;top:161px">TP</div>
<div class="sp" style="left:216px;top:159px;width:87px;height:25px;line-height:23px">5</div>

<div class="gb" style="left:311px;top:13px;width:283px;height:142px"></div>
<div class="t gl" style="left:318px;top:7px">Лимитный ордер</div>
<div class="cb on" style="left:319px;top:26px"></div><div class="t f13" style="left:339px;top:26px">отменяется, если цена ушла на</div>
<div class="sp" style="left:319px;top:49px;width:76px;height:21px;line-height:19px">5</div><div class="t" style="left:405px;top:51px">тиков</div>
<div class="cb" style="left:319px;top:81px"></div><div class="t" style="left:339px;top:81px">передвигается на</div>
<div class="sp" style="left:475px;top:76px;width:56px;height:21px;line-height:19px">0</div><div class="t" style="left:540px;top:80px">тиков</div>
<div class="t" style="left:320px;top:107px">если цена прошла</div>
<div class="sp" style="left:456px;top:103px;width:63px;height:21px;line-height:19px">0</div><div class="t" style="left:526px;top:108px">тиков и</div>
<div class="t" style="left:320px;top:133px">прошло не более</div>
<div class="sp" style="left:456px;top:129px;width:76px;height:22px;line-height:20px">0</div><div class="t" style="left:544px;top:133px">сек.</div>
<div class="cb on" style="left:323px;top:165px"></div><div class="t" style="left:343px;top:164px;font-size:12.800px">тейкпрофит лимитным ордером</div>

<div class="gb" style="left:7px;top:197px;width:296px;height:132px"></div>
<div class="t gl" style="left:15px;top:190px">Дельта/Объем</div>
<div class="rd" style="left:16px;top:215px"></div><div class="t" style="left:36px;top:216px">покупка</div>
<div class="cb" style="left:114px;top:216px"></div><div class="vk" style="left:135px;top:213px">ВКЛЮЧИТЬ</div>
<div class="rd on" style="left:16px;top:244px"></div><div class="t" style="left:36px;top:245px">продажа</div>
<div class="sp" style="left:114px;top:242px;width:76px;height:22px;line-height:20px">5</div><div class="t" style="left:192px;top:245px">таймер, сек</div>
<div class="cb on" style="left:16px;top:274px"></div><div class="t f13" style="left:36px;top:274px">использовать линию</div>
<div class="cb on" style="left:204px;top:274px"></div><div class="t" style="left:224px;top:274px">лимит</div>
<div class="sp" style="left:16px;top:298px;width:56px;height:22px;line-height:20px">2</div><div class="t" style="left:80px;top:302px;font-size:13.200px">допуск по сигналу в тиках</div>

<div class="gb" style="left:311px;top:197px;width:283px;height:132px"></div>
<div class="t gl" style="left:319px;top:190px">Имбаланс</div>
<div class="rd" style="left:322px;top:212px"></div><div class="t" style="left:342px;top:213px">покупка</div>
<div class="cb" style="left:420px;top:215px"></div><div class="vk" style="left:441px;top:212px">ВКЛЮЧИТЬ</div>
<div class="rd on" style="left:322px;top:242px"></div><div class="t" style="left:342px;top:243px">продажа</div>
<div class="sp" style="left:419px;top:240px;width:76px;height:22px;line-height:20px">5</div><div class="t" style="left:500px;top:245px">таймер, сек</div>
<div class="cb on" style="left:322px;top:274px"></div><div class="t f13" style="left:342px;top:274px">использовать линию</div>
<div class="cb on" style="left:512px;top:274px"></div><div class="t" style="left:532px;top:274px">лимит</div>
<div class="sp" style="left:323px;top:298px;width:56px;height:22px;line-height:20px">2</div><div class="t" style="left:388px;top:302px;font-size:13.200px">допуск по сигналу в тиках</div>

<div class="cb" style="left:16px;top:336px"></div><div class="t f13" style="left:36px;top:336px">комбинированный сигнал Дельта/Объем и Имбаланс</div>
</div>
</body></html>
